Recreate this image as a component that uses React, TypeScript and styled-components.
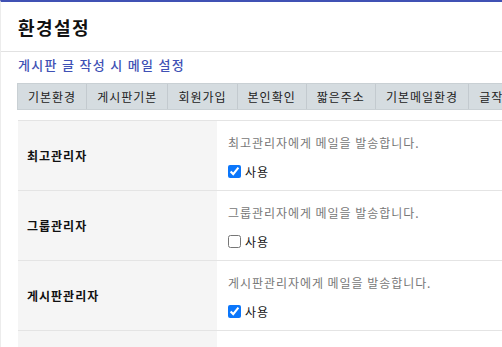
import React, { useState } from 'react';
import styled, { createGlobalStyle } from 'styled-components';

const GlobalStyle = createGlobalStyle`
  html, body {
    margin: 0;
    padding: 0;
    background: #fff;
    overflow: hidden;
  }
  body {
    font-family: "Noto Sans CJK KR", "Noto Sans", sans-serif;
    color: #000;
  }
`;

// Define the mail option rows
interface IMailOption {
  label: string;
  desc: string;
  checked: boolean;
}

const mailOptions: IMailOption[] = [
  { label: '최고관리자', desc: '최고관리자에게 메일을 발송합니다.', checked: true },
  { label: '그룹관리자', desc: '그룹관리자에게 메일을 발송합니다.', checked: false },
  { label: '게시판관리자', desc: '게시판관리자에게 메일을 발송합니다.', checked: true },
  { label: '원글작성자', desc: '게시자님께 답변글이 올라오면 메일을 보내 드립니다.', checked: true },
];

const tabs = ['기본환경', '게시판기본', '회원가입', '본인확인', '짧은주소', '기본메일환경', '글작성메일', '쪽지메일'];

const Page = styled.div`
  width: 900px;
  min-height: 347px;
  border-top: 2px solid #4051b4;
  border-left: 1px solid #ececec;
  box-sizing: border-box;
`;

const Header = styled.header`
  height: 49px;
  display: flex;
  align-items: center;
  padding-left: 17px;
  border-bottom: 1px solid #e2e2e2;
`;

const Title = styled.h1`
  margin: 0;
  font-size: 18px;
  font-weight: 700;
  letter-spacing: 1.4px;
  color: #111;
`;

const Content = styled.section`
  padding: 0 0 0 16px;
`;

const SubTitle = styled.h2`
  margin: 0;
  height: 31px;
  line-height: 26px;
  font-size: 13px;
  font-weight: 500;
  letter-spacing: 1.3px;
  color: #3f51b5;
  padding-left: 1px;
`;

const TabBar = styled.ul`
  display: flex;
  margin: 0;
  padding: 0;
  list-style: none;
  height: 27px;
  background: #d5dce0;
  border: 1px solid #c9d0d4;
  border-right: 0;
  box-sizing: border-box;
`;

const Tab = styled.li`
  padding: 0 10px;
  font-size: 12px;
  line-height: 25px;
  letter-spacing: 1px;
  color: #222;
  border-right: 1px solid #c3cacf;
  white-space: nowrap;
`;

const Table = styled.table`
  margin-top: 10px;
  margin-left: 1px;
  width: 860px;
  border-collapse: collapse;
  border-top: 1px solid #e4e4e4;
`;

const Row = styled.tr`
  border-bottom: 1px solid #e4e4e4;
`;

const Th = styled.th`
  width: 199px;
  height: 69px;
  padding: 0 0 0 9px;
  box-sizing: border-box;
  background: #f5f5f5;
  text-align: left;
  font-size: 12px;
  font-weight: 700;
  letter-spacing: 1px;
  color: #111;
`;

const Td = styled.td`
  padding: 12px 11px 9px;
  vertical-align: top;
`;

const Desc = styled.p`
  margin: 0;
  font-size: 12px;
  line-height: 20px;
  letter-spacing: 0.95px;
  color: #777;
`;

const CheckLabel = styled.label`
  display: flex;
  align-items: center;
  margin-top: 8px;
  height: 20px;
  font-size: 12px;
  letter-spacing: 1px;
  color: #111;
`;

const Check = styled.input`
  width: 13px;
  height: 13px;
  margin: 0 4px 0 0;
  accent-color: #0b76fb;
`;

const OptionRow: React.FC<{ option: IMailOption }> = ({ option }) => {
  const [checked, setChecked] = useState(option.checked);
  return (
    <Row>
      <Th>{option.label}</Th>
      <Td>
        <Desc>{option.desc}</Desc>
        <CheckLabel>
          <Check type="checkbox" checked={checked} onChange={() => setChecked(!checked)} />
          사용
        </CheckLabel>
      </Td>
    </Row>
  );
};

const App: React.FC = () => {
  return (
    <Page>
      <GlobalStyle />
      <Header>
        <Title>환경설정</Title>
      </Header>
      <Content>
        <SubTitle>게시판 글 작성 시 메일 설정</SubTitle>
        <TabBar>
          {tabs.map((t) => (
            <Tab key={t}>{t}</Tab>
          ))}
        </TabBar>
        <Table>
          <tbody>
            {mailOptions.map((o) => (
              <OptionRow key={o.label} option={o} />
            ))}
          </tbody>
        </Table>
      </Content>
    </Page>
  );
};

export default App;
